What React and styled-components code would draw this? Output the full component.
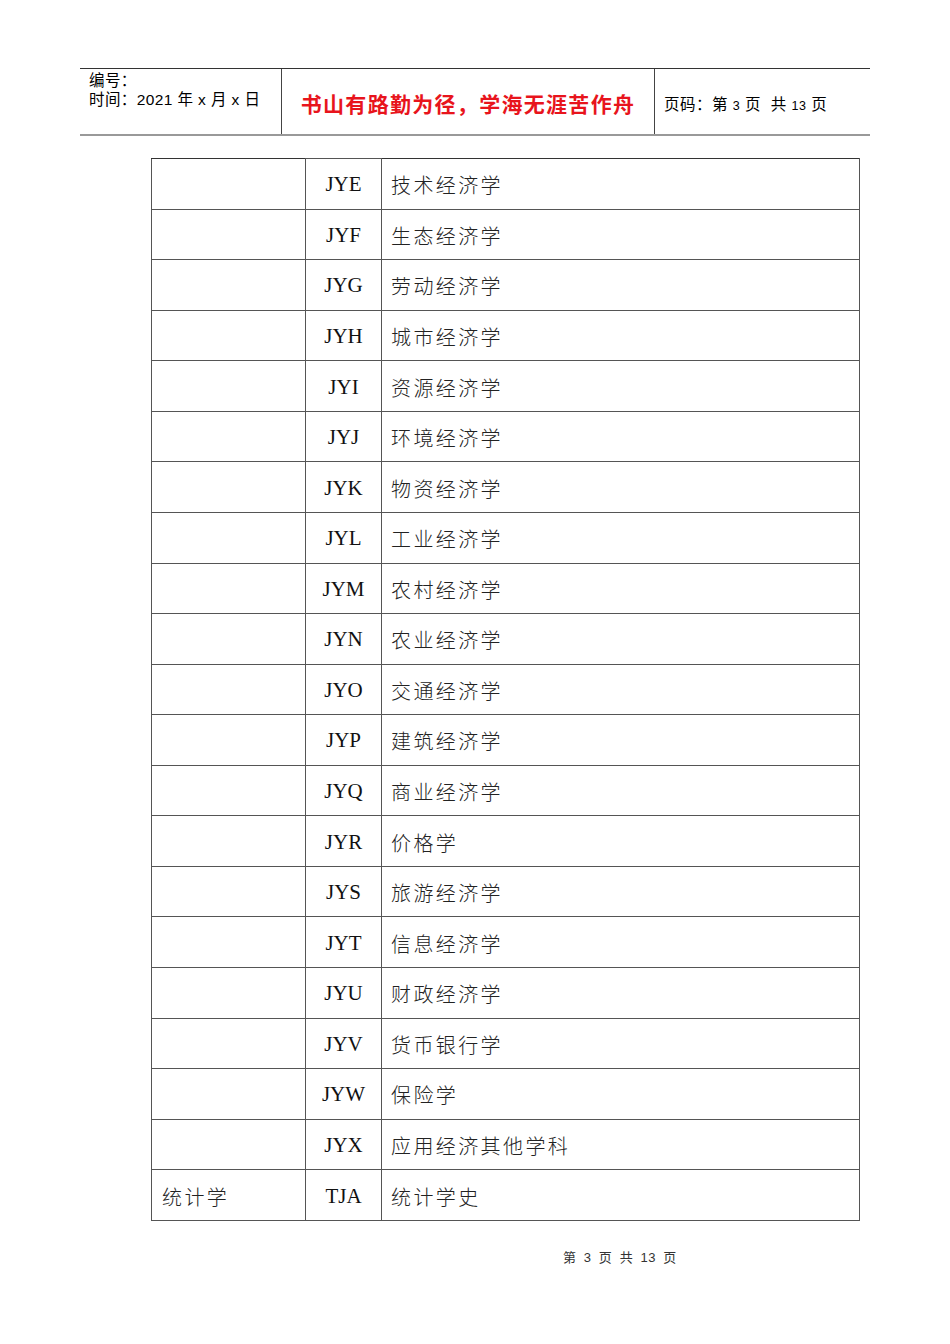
import React from 'react';
import styled, { createGlobalStyle } from 'styled-components';

const GlobalStyle = createGlobalStyle`
  html, body {
    margin: 0;
    padding: 0;
    background: #fff;
  }
  body {
    font-family: "Liberation Sans", "Noto Sans CJK SC", sans-serif;
    color: #000;
  }
`;

const Page = styled.div`
  width: 950px;
  height: 1344px;
  padding-top: 68px;
  box-sizing: border-box;
  position: relative;
`;

const Header = styled.div`
  margin-left: 80px;
  width: 790px;
  height: 68px;
  box-sizing: border-box;
  border-top: 1px solid #333;
  border-bottom: 2px solid #999;
  display: grid;
  grid-template-columns: 201px 373px 1fr;
`;

const HeaderCell = styled.div`
  display: flex;
  flex-direction: column;
  justify-content: ${({ $top }) => ($top ? 'flex-start' : 'center')};
  align-items: ${({ $center }) => ($center ? 'center' : 'flex-start')};
  padding: ${({ $top }) => ($top ? '2px 0 0 9px' : '0 0 0 9px')};
  border-left: ${({ $divider }) => ($divider ? '1px solid #444' : 'none')};
  box-sizing: border-box;
`;

const MetaLine = styled.div`
  font-size: 15.5px;
  line-height: 19px;
  white-space: nowrap;
  letter-spacing: 0.4px;
`;

const Motto = styled.div`
  color: #e8141c;
  font-weight: bold;
  font-size: 21px;
  letter-spacing: 1.3px;
  margin-left: -9px;
  padding-top: 3px;
  font-family: "Noto Sans CJK SC", sans-serif;
`;

const PageInfo = styled.div`
  font-size: 15.5px;
  white-space: nowrap;
  padding-top: 2px;
  letter-spacing: 0.5px;
`;

const Num = styled.span`
  font-size: 12.5px;
`;

const Table = styled.table`
  margin: 22px 0 0 151px;
  width: 709px;
  border-collapse: collapse;
  border: 1px solid #333;
`;

const Row = styled.tr`
  height: 50.57px;
`;

const Cell = styled.td`
  border: 1px solid #555;
  border-top-color: #333;
  padding: 2px 0 0 ${({ $pad }) => $pad || 0}px;
  font-size: 20px;
  letter-spacing: 2.4px;
  font-family: "Liberation Serif", "Noto Sans CJK SC", serif;
  font-weight: 300;
  color: #222;
  vertical-align: middle;
`;

const CodeCell = styled.td`
  border: 1px solid #555;
  width: 75px;
  text-align: center;
  font-family: "Liberation Serif", "Times New Roman", serif;
  font-size: 21px;
  color: #111;
  padding: 2px 0 0;
`;

const Footer = styled.div`
  position: absolute;
  top: 1247px;
  left: 0;
  width: 950px;
  padding-left: 290px;
  box-sizing: border-box;
  text-align: center;
  font-size: 13px;
  color: #333;
  letter-spacing: 0.6px;
  word-spacing: 3px;
  font-family: "Liberation Sans", "Noto Sans CJK SC", sans-serif;
`;

const rows = [
  ['', 'JYE', '技术经济学'],
  ['', 'JYF', '生态经济学'],
  ['', 'JYG', '劳动经济学'],
  ['', 'JYH', '城市经济学'],
  ['', 'JYI', '资源经济学'],
  ['', 'JYJ', '环境经济学'],
  ['', 'JYK', '物资经济学'],
  ['', 'JYL', '工业经济学'],
  ['', 'JYM', '农村经济学'],
  ['', 'JYN', '农业经济学'],
  ['', 'JYO', '交通经济学'],
  ['', 'JYP', '建筑经济学'],
  ['', 'JYQ', '商业经济学'],
  ['', 'JYR', '价格学'],
  ['', 'JYS', '旅游经济学'],
  ['', 'JYT', '信息经济学'],
  ['', 'JYU', '财政经济学'],
  ['', 'JYV', '货币银行学'],
  ['', 'JYW', '保险学'],
  ['', 'JYX', '应用经济其他学科'],
  ['统计学', 'TJA', '统计学史'],
];

const App = () => {
  return (
    <Page>
      <GlobalStyle />
      <Header>
        <HeaderCell $top>
          <MetaLine>编号：</MetaLine>
          <MetaLine>时间：2021 年 x 月 x 日</MetaLine>
        </HeaderCell>
        <HeaderCell $divider $center>
          <Motto>书山有路勤为径，学海无涯苦作舟</Motto>
        </HeaderCell>
        <HeaderCell $divider>
          <PageInfo>
            页码：第 <Num>3</Num> 页&nbsp; 共 <Num>13</Num> 页
          </PageInfo>
        </HeaderCell>
      </Header>

      <Table>
        <colgroup>
          <col style={{ width: 154 }} />
          <col style={{ width: 76 }} />
          <col />
        </colgroup>
        <tbody>
          {rows.map(([group, code, name]) => (
            <Row key={code}>
              <Cell $pad={10}>{group}</Cell>
              <CodeCell>{code}</CodeCell>
              <Cell $pad={9}>{name}</Cell>
            </Row>
          ))}
        </tbody>
      </Table>

      <Footer>第 3 页 共 13 页</Footer>
    </Page>
  );
};

export default App;
